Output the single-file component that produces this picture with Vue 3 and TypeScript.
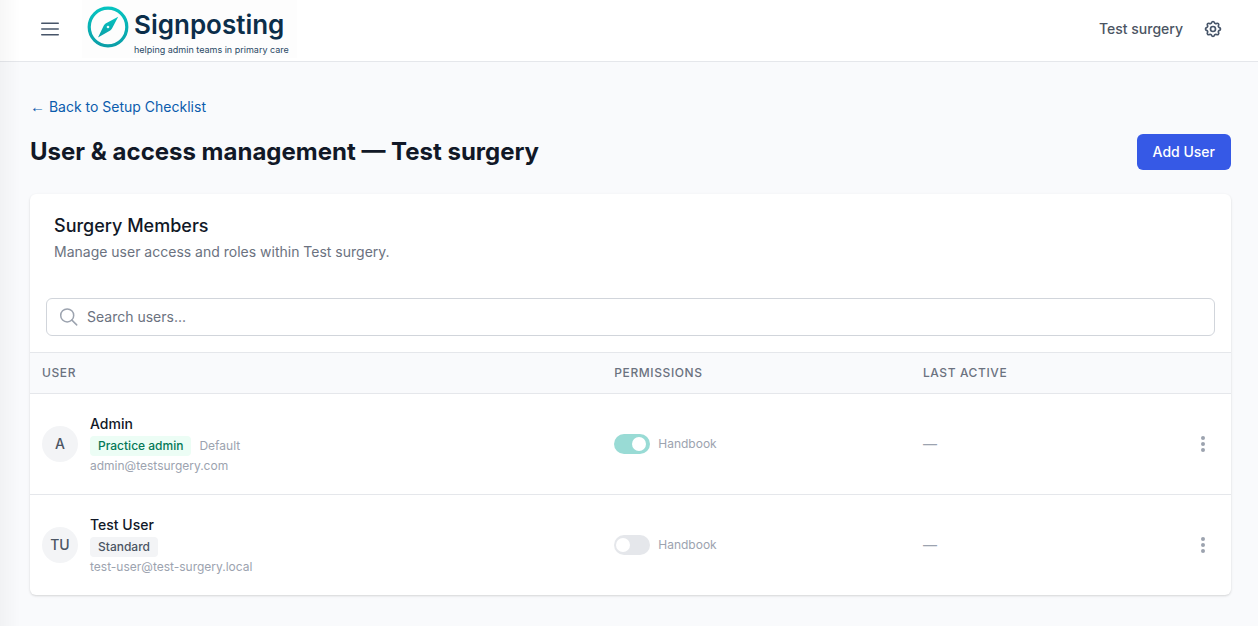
<script setup lang="ts">
import { ref } from 'vue'

interface Member {
  id: number
  initials: string
  name: string
  role: string
  tone: 'green' | 'grey'
  isDefault: boolean
  email: string
  handbook: boolean
  lastActive: string
}

const surgery = 'Test surgery'
const query = ref('')
const members = ref<Member[]>([
  { id: 1, initials: 'A', name: 'Admin', role: 'Practice admin', tone: 'green', isDefault: true, email: 'admin@testsurgery.com', handbook: true, lastActive: '—' },
  { id: 2, initials: 'TU', name: 'Test User', role: 'Standard', tone: 'grey', isDefault: false, email: 'test-user@test-surgery.local', handbook: false, lastActive: '—' },
])
</script>

<template>
  <div class="page">
    <header class="topbar">
      <button class="icon-btn menu" type="button" aria-label="Open menu">
        <svg width="24" height="24" viewBox="0 0 24 24" fill="none" stroke="currentColor" stroke-width="1.5" stroke-linecap="round">
          <path d="M3.75 6.25h16.5M3.75 12h16.5M3.75 17.75h16.5" />
        </svg>
      </button>
      <a class="brand" href="#">
        <svg class="compass" width="42" height="42" viewBox="0 0 42 42" aria-hidden="true">
          <defs>
            <linearGradient id="ring" x1="0" y1="0" x2="0" y2="1">
              <stop offset="0" stop-color="#06c3c0" />
              <stop offset="1" stop-color="#0b9fa8" />
            </linearGradient>
          </defs>
          <circle cx="21" cy="21" r="18.8" fill="none" stroke="url(#ring)" stroke-width="3.2" />
          <path d="M31.2 10.8 L25 22.6 Q24.4 23.8 23.2 24.6 L11 31.6 L16.8 19.4 Q17.4 18.2 18.6 17.4 Z" fill="url(#ring)" />
          <circle cx="21" cy="21" r="1.3" fill="#e8fbfa" />
        </svg>
        <span class="brand-text">
          <span class="brand-name">Signposting</span>
          <span class="brand-tag">helping admin teams in primary care</span>
        </span>
      </a>
      <div class="account">
        <span class="surgery">{{ surgery }}</span>
        <button class="icon-btn" type="button" aria-label="Settings">
          <svg width="20" height="20" viewBox="0 0 24 24" fill="none" stroke="currentColor" stroke-width="2" stroke-linecap="round" stroke-linejoin="round">
            <path d="M10.325 4.317c.426-1.756 2.924-1.756 3.35 0a1.724 1.724 0 002.573 1.066c1.543-.94 3.31.826 2.37 2.37a1.724 1.724 0 001.065 2.572c1.756.426 1.756 2.924 0 3.35a1.724 1.724 0 00-1.066 2.573c.94 1.543-.826 3.31-2.37 2.37a1.724 1.724 0 00-2.572 1.065c-.426 1.756-2.924 1.756-3.35 0a1.724 1.724 0 00-2.573-1.066c-1.543.94-3.31-.826-2.37-2.37a1.724 1.724 0 00-1.065-2.572c-1.756-.426-1.756-2.924 0-3.35a1.724 1.724 0 001.066-2.573c-.94-1.543.826-3.31 2.37-2.37.996.608 2.296.07 2.572-1.065z" />
            <circle cx="12" cy="12" r="3" />
          </svg>
        </button>
      </div>
    </header>

    <main class="content">
      <a class="back" href="#"><span class="arrow">←</span> Back to Setup Checklist</a>
      <div class="heading">
        <h1>User &amp; access management — {{ surgery }}</h1>
        <button class="primary" type="button">Add User</button>
      </div>

      <section class="card">
        <div class="card-head">
          <h2>Surgery Members</h2>
          <p>Manage user access and roles within {{ surgery }}.</p>
        </div>
        <div class="search">
          <label class="search-box">
            <svg width="20" height="20" viewBox="0 0 20 20" fill="none" stroke="currentColor" stroke-width="1.5" stroke-linecap="round" aria-hidden="true">
              <circle cx="8.2" cy="8.4" r="6.5" />
              <path d="M12.9 13.1l4.8 4.8" />
            </svg>
            <input v-model="query" type="text" placeholder="Search users..." aria-label="Search users" />
          </label>
        </div>
        <table>
          <colgroup>
            <col class="col-user" />
            <col class="col-perm" />
            <col class="col-last" />
            <col class="col-menu" />
          </colgroup>
          <thead>
            <tr>
              <th scope="col">User</th>
              <th scope="col">Permissions</th>
              <th scope="col">Last active</th>
              <th scope="col" aria-label="Actions"></th>
            </tr>
          </thead>
          <tbody>
            <tr v-for="m in members" :key="m.id">
              <td>
                <div class="user">
                  <span class="avatar">{{ m.initials }}</span>
                  <div class="details">
                    <span class="name">{{ m.name }}</span>
                    <span class="roles">
                      <span class="badge" :class="m.tone">{{ m.role }}</span>
                      <span v-if="m.isDefault" class="muted">Default</span>
                    </span>
                    <span class="muted">{{ m.email }}</span>
                  </div>
                </div>
              </td>
              <td>
                <label class="toggle">
                  <input v-model="m.handbook" type="checkbox" role="switch" disabled />
                  <span class="muted">Handbook</span>
                </label>
              </td>
              <td class="last">{{ m.lastActive }}</td>
              <td class="actions">
                <button class="icon-btn dots" type="button" :aria-label="`Actions for ${m.name}`">
                  <svg width="20" height="20" viewBox="0 0 20 20" fill="currentColor">
                    <circle cx="10" cy="4" r="2" />
                    <circle cx="10" cy="10" r="2" />
                    <circle cx="10" cy="16" r="2" />
                  </svg>
                </button>
              </td>
            </tr>
          </tbody>
        </table>
      </section>
    </main>
  </div>
</template>

<style>
body {
  background: #f9fafc;
}
</style>

<style scoped>
.page {
  min-height: 100vh;
  background: #f9fafc;
  color: #111827;
  font-family: Inter, "Liberation Sans", sans-serif;
  font-size: 14px;
  line-height: 20px;
}
.page::before {
  content: "";
  position: fixed;
  top: 0;
  bottom: 0;
  left: 0;
  width: 20px;
  background: linear-gradient(to right, rgba(0, 0, 0, 0.03), rgba(0, 0, 0, 0));
  pointer-events: none;
}
.page *,
.page *::before {
  box-sizing: border-box;
}
button,
input {
  font: inherit;
}
.topbar {
  display: flex;
  align-items: center;
  height: 62px;
  padding: 0 35px 4px 38px;
  background: #fff;
  border-bottom: 1px solid #e5e7eb;
}
.icon-btn {
  display: flex;
  padding: 0;
  border: 0;
  background: none;
  color: #475569;
  cursor: pointer;
}
.brand {
  display: flex;
  align-items: flex-start;
  gap: 5px;
  height: 58px;
  margin-left: 20px;
  padding: 6px 8px 0 5px;
  background: #fdfdfd;
  color: #0b2e4a;
  text-decoration: none;
}
.brand-text {
  display: flex;
  flex-direction: column;
}
.brand-name {
  font-size: 26px;
  font-weight: 600;
  line-height: 38px;
}
.brand-tag {
  color: #2b4a66;
  font-size: 9px;
  line-height: 12px;
}
.account {
  display: flex;
  align-items: center;
  gap: 20px;
  margin-left: auto;
}
.surgery {
  color: #4b5563;
  font-weight: 500;
}
.content {
  padding: 35px 27px 30px 30px;
}
.back {
  display: block;
  width: fit-content;
  color: #0b5cad;
  text-decoration: none;
}
.arrow {
  font-family: "Liberation Sans", sans-serif;
  font-size: 15px;
  line-height: 16px;
}
.heading {
  display: flex;
  align-items: center;
  justify-content: space-between;
  margin: 17px 0 24px;
}
h1 {
  margin: 0;
  font-size: 24px;
  font-weight: 700;
  line-height: 32px;
}
.primary {
  height: 36px;
  padding: 0 16px;
  border: 0;
  border-radius: 6px;
  background: #3659e6;
  color: #fff;
  font-weight: 500;
  cursor: pointer;
}
.card {
  overflow: hidden;
  background: #fff;
  border-radius: 6px;
  box-shadow: 0 1px 3px rgba(0, 0, 0, 0.1), 0 1px 2px rgba(0, 0, 0, 0.06);
}
.card-head {
  padding: 20px 24px;
}
h2 {
  margin: 0 0 4px;
  font-size: 18px;
  font-weight: 500;
  line-height: 24px;
}
.card-head p {
  margin: 0;
  color: #6b7280;
}
.search {
  padding: 16px;
}
.search-box {
  display: flex;
  align-items: center;
  gap: 8px;
  height: 38px;
  padding: 0 12px;
  border: 1px solid #d1d5db;
  border-radius: 6px;
  color: #9ca3af;
}
.search-box input {
  flex: 1;
  padding: 0;
  border: 0;
  outline: 0;
  background: none;
  color: #111827;
}
.search-box input::placeholder {
  color: #6b7280;
  opacity: 1;
}
table {
  width: 100%;
  border-collapse: separate;
  border-spacing: 0;
  table-layout: fixed;
}
.col-user {
  width: 47.65%;
}
.col-perm {
  width: 25.7%;
}
.col-menu {
  width: 56px;
}
th {
  height: 42px;
  padding: 0 12px;
  border-top: 1px solid #e5e7eb;
  border-bottom: 1px solid #e5e7eb;
  background: #f9fafc;
  color: #6b7280;
  font-size: 12px;
  font-weight: 500;
  letter-spacing: 0.05em;
  line-height: 16px;
  text-align: left;
  text-transform: uppercase;
}
td {
  height: 100px;
  padding: 0 12px;
}
tbody tr + tr td {
  height: 101px;
  border-top: 1px solid #e5e7eb;
}
.user {
  display: flex;
  align-items: center;
  gap: 12px;
}
.avatar {
  display: flex;
  align-items: center;
  justify-content: center;
  width: 36px;
  height: 36px;
  border-radius: 50%;
  background: #f3f4f6;
  color: #4b5563;
  font-weight: 500;
}
.details {
  display: flex;
  flex-direction: column;
  align-items: flex-start;
}
.name {
  font-weight: 500;
}
.roles {
  display: flex;
  align-items: center;
  gap: 8px;
  margin: 2px 0;
}
.badge {
  padding: 2px 8px;
  border-radius: 4px;
  font-size: 12px;
  font-weight: 500;
  line-height: 16px;
}
.green {
  background: #ecfdf5;
  color: #047857;
}
.grey {
  background: #f3f4f6;
  color: #4b5563;
}
.muted {
  color: #9ca3af;
  font-size: 12px;
  line-height: 16px;
}
.toggle {
  display: flex;
  align-items: center;
  gap: 8px;
  width: fit-content;
}
.toggle input {
  display: flex;
  align-items: center;
  width: 36px;
  height: 20px;
  margin: 0;
  padding: 0 2px;
  border-radius: 10px;
  background: #e5e7eb;
  appearance: none;
}
.toggle input::before {
  content: "";
  width: 14px;
  height: 14px;
  border-radius: 50%;
  background: #fff;
}
.toggle input:checked {
  justify-content: flex-end;
  padding: 0 4px;
  background: #99dbd5;
}
.last {
  color: #9ca3af;
}
.actions .dots {
  margin-left: auto;
  margin-right: 6px;
  color: #9ca3af;
}
</style>
